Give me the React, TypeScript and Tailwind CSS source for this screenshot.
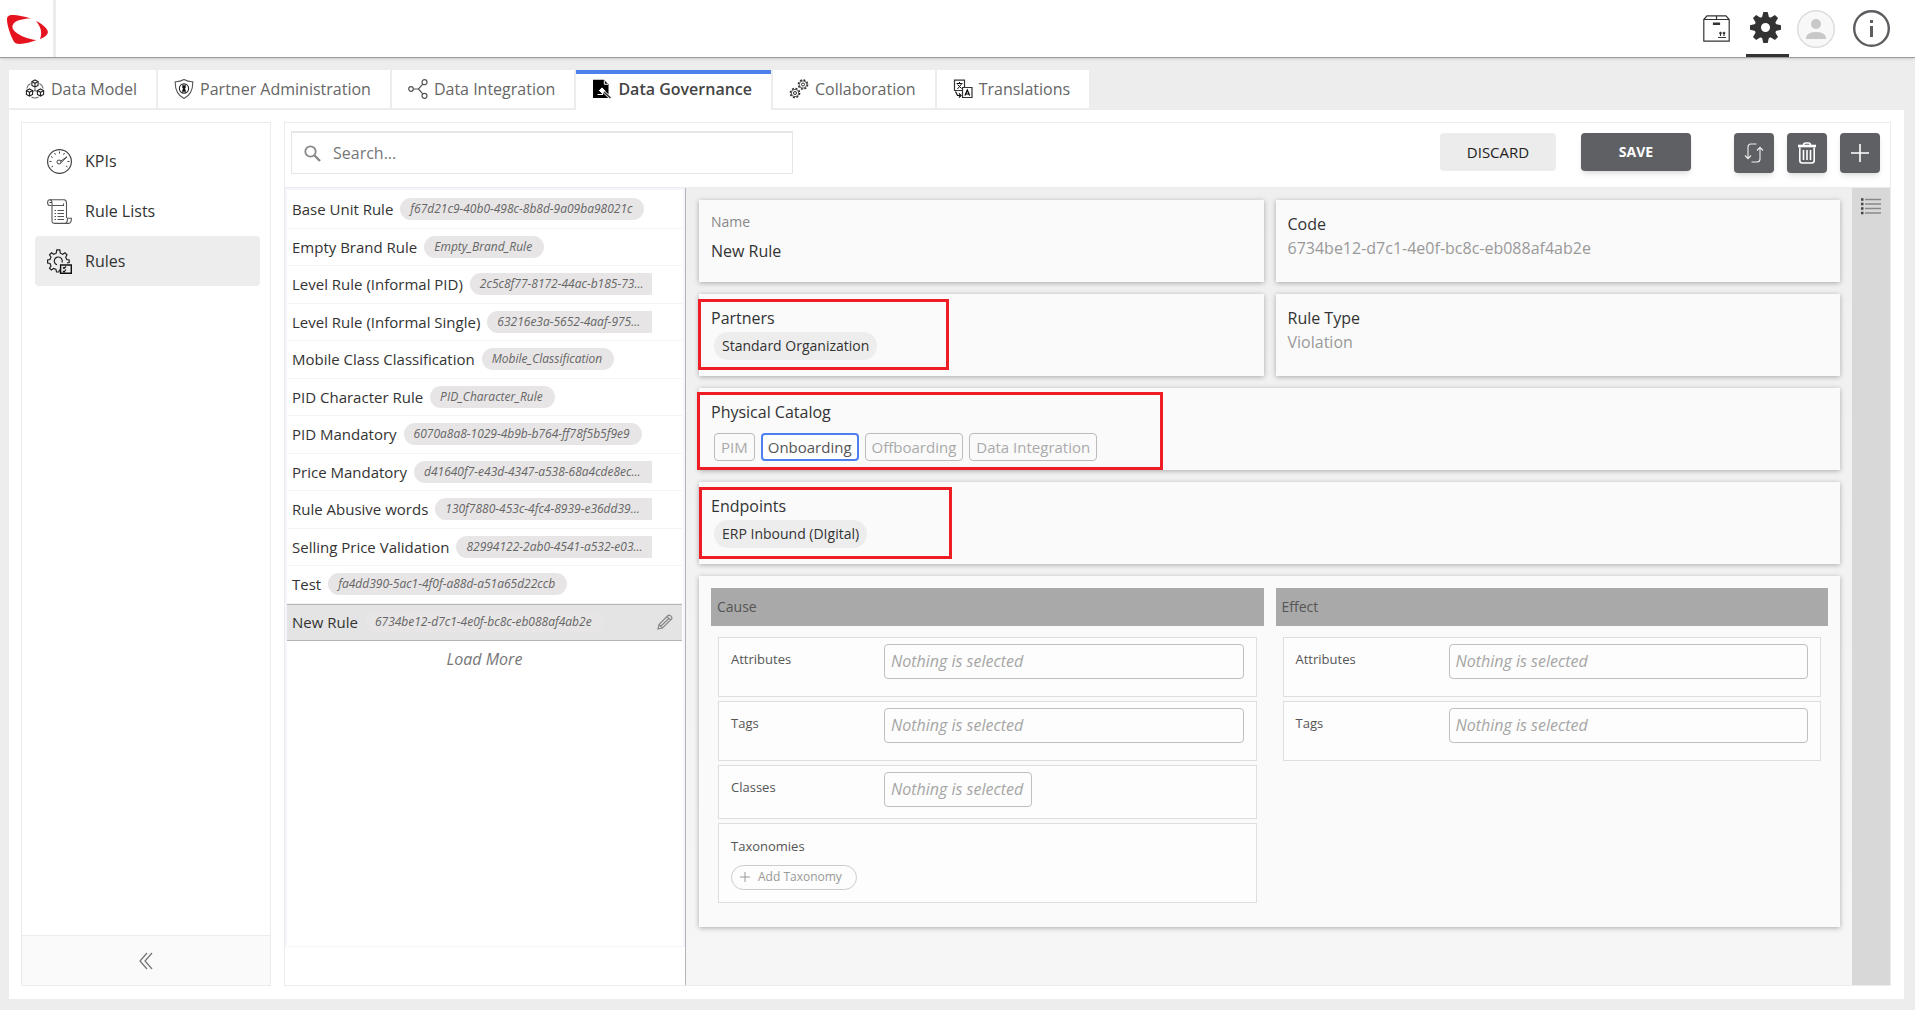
import React, { useState } from "react";

const rules = [
  { name: "Base Unit Rule", code: "f67d21c9-40b0-498c-8b8d-9a09ba98021c" },
  { name: "Empty Brand Rule", code: "Empty_Brand_Rule" },
  { name: "Level Rule (Informal PID)", code: "2c5c8f77-8172-44ac-b185-73..." },
  { name: "Level Rule (Informal Single)", code: "63216e3a-5652-4aaf-975..." },
  { name: "Mobile Class Classification", code: "Mobile_Classification" },
  { name: "PID Character Rule", code: "PID_Character_Rule" },
  { name: "PID Mandatory", code: "6070a8a8-1029-4b9b-b764-ff78f5b5f9e9" },
  { name: "Price Mandatory", code: "d41640f7-e43d-4347-a538-68a4cde8ec..." },
  { name: "Rule Abusive words", code: "130f7880-453c-4fc4-8939-e36dd39..." },
  { name: "Selling Price Validation", code: "82994122-2ab0-4541-a532-e03..." },
  { name: "Test", code: "fa4dd390-5ac1-4f0f-a88d-a51a65d22ccb" },
  { name: "New Rule", code: "6734be12-d7c1-4e0f-bc8c-eb088af4ab2e" },
];

const angles = [0, 45, 90, 135, 180, 225, 270, 315];

function Logo() {
  return (
    <svg width="53" height="57" viewBox="0 0 53 57" fill="#e5131d">
      <path d="M31 18.5C24 16.5 17 15 12.500 15C8.500 15 7 16.500 7 19.500C7 25 10 34 13 40C14.500 43 16.500 44 19.500 44C25 43.800 31 42 36.500 40C29 39.500 20 36 15.500 32C12 29 11.500 26 14 23C17 20 24 18.500 31 18.500Z" />
      <path d="M36 21C41 23 45 26.500 47 29.500C48.500 32 48 34 45.500 36C44 37.200 42 38.300 40 39C42.500 33 41 27 36 21Z" />
    </svg>
  );
}

function Cube({ x, y }: { x: number; y: number }) {
  return (
    <g transform={`translate(${x} ${y})`}>
      <path d="M0-3.600L3.100-1.900V1.900L0 3.600L-3.100 1.900V-1.900Z" />
      <path d="M-3.100-1.900L0-.2L3.100-1.900M0-.2V3.600" />
    </g>
  );
}

function DataModelIcon() {
  return (
    <svg width="20" height="20" viewBox="0 0 20 20" fill="none" stroke="#222" strokeWidth="1.100">
      <Cube x={10} y={4.5} />
      <Cube x={4.5} y={13.5} />
      <Cube x={15.5} y={13.5} />
      <path d="M5.500 4.500Q2.500 6 1.800 9.500M14.500 4.500Q17.500 6 18.200 9.500M6.500 18Q10 20 13.500 18M10 9V11.500L7.800 12.500M10 11.500L12.200 12.500" stroke="#666" />
    </svg>
  );
}

function ShieldIcon() {
  return (
    <svg width="20" height="20" viewBox="0 0 20 20" fill="none" stroke="#555">
      <path d="M10 .6C7.500 2 4 2.800 1.200 2.700C1 10 3 16 10 19.500C17 16 19 10 18.800 2.700C16 2.800 12.500 2 10 .6Z" strokeWidth="1.100" />
      <circle cx="10" cy="9.500" r="4.600" stroke="#222" strokeWidth="1.100" />
      <path d="M8.500 6.500H11.500V8.500L10.800 9.500L11.800 12.500H8.200L9.200 9.500L8.500 8.500Z" fill="#111" stroke="#111" strokeWidth=".5" />
    </svg>
  );
}

function IntegrationIcon() {
  return (
    <svg width="20" height="20" viewBox="0 0 20 20" fill="none" stroke="#555" strokeWidth="1.200">
      <circle cx="3" cy="10" r="2.300" />
      <circle cx="16.500" cy="3.200" r="2.500" />
      <circle cx="16.500" cy="16.800" r="2.500" />
      <path d="M5.300 10H10.500L14.800 5.200M10.500 10L14.800 14.800" />
    </svg>
  );
}

function GovernanceIcon() {
  return (
    <svg width="20" height="20" viewBox="0 0 20 20">
      <path d="M1 .8H12L16.500 5.500V19H1Z" fill="#000" />
      <path d="M12.300 1.500V5.300H16" fill="none" stroke="#fff" />
      <path d="M6.500 11.500L10 8L14 12L10.500 15.500Z" fill="#fff" stroke="#000" strokeWidth=".8" />
      <path d="M12 13L18.500 19" stroke="#fff" strokeWidth="3" />
      <path d="M12 13L18.500 19" stroke="#333" strokeWidth="1.600" />
      <path d="M5.500 15.500H11" stroke="#fff" />
    </svg>
  );
}

function SmallGear({ x, y }: { x: number; y: number }) {
  return (
    <g transform={`translate(${x} ${y})`}>
      <circle r="4.600" strokeWidth="1.500" strokeDasharray="2 1.600" />
      <circle r="3.700" strokeWidth=".8" />
      <circle r="1.500" />
    </g>
  );
}

function CollaborationIcon() {
  return (
    <svg width="20" height="20" viewBox="0 0 20 20" fill="none" stroke="#333">
      <SmallGear x={6} y={14} />
      <SmallGear x={14} y={5.5} />
    </svg>
  );
}

function TranslationIcon() {
  return (
    <svg width="20" height="20" viewBox="0 0 20 20" fill="none" stroke="#333">
      <path d="M10 11.500H1.500V1.200H11.500V8" strokeWidth="1.200" />
      <path d="M3.500 4.500H9.500M6.500 3V4.500M4.500 10L8.500 5M4.500 5.500L8.500 9.500" stroke="#111" />
      <path d="M9.500 8.500H19V18.500H9.500Z" strokeWidth="1.200" />
      <path d="M12 16.500L14.300 11L16.600 16.500M12.800 15H15.800" stroke="#000" strokeWidth="1.200" />
      <path d="M2.500 12.500L4.500 16.500H8M6 14.500L8 16.500L6 18.500" stroke="#111" strokeWidth="1.200" />
    </svg>
  );
}

function KpiIcon() {
  return (
    <svg width="25" height="25" viewBox="0 0 25 25" fill="none" stroke="#444">
      <circle cx="12.500" cy="12.500" r="11.900" strokeWidth="1.200" />
      <circle cx="12" cy="13" r="2" />
      <path d="M13.800 12L20 7.800L14.200 13.500" />
      <path d="M12.500 2.500V4.500M2.500 12.500H4.500M20.500 12.500H22.500M7.500 4L8.500 5.700M17.500 4L16.500 5.700M4 7.500L5.700 8.500M4.500 18L6 17M20.500 18L19 17" />
    </svg>
  );
}

function RuleListIcon() {
  return (
    <svg width="25" height="25" viewBox="0 0 25 25" fill="none" stroke="#555" strokeWidth="1.100">
      <path d="M4.500 6.500H2.500Q.6 6.500 .6 3.600Q.6 .8 2.800 .8H17Q19.500 1 19.500 4V19" />
      <path d="M2.800 .8Q5 1 5 4V22.500Q5.200 24.400 7.500 24.400H22Q24.400 24 24.400 19.300H20.500Q20.500 24 18 24.400" />
      <path d="M5 6.500H16.500V4.500M2.500 3.500H5" />
      <path d="M7.500 11.500H9M7.500 14.500H9M7.500 17.500H9M7.500 20.500H9M10.500 11.500H17M10.500 14.500H17M10.500 17.500H17M10.500 20.500H17" />
    </svg>
  );
}

function RulesIcon() {
  return (
    <svg width="25" height="25" viewBox="0 0 25 25" fill="none" stroke="#222" strokeWidth="1.200">
      <path d="M12.500 20.500L12 23H9.500L9 20.500L6.500 19.500L4.300 21L2.500 19.200L4 17L3 14.500L.6 14V11L3 10.500L4 8L2.500 5.800L4.500 3.800L6.700 5.300L9.200 4.200L9.800 .8H12.800L13.300 4.200L15.800 5.300L18 3.800L20 5.800L18.700 8L19.700 10.500L22.200 11V13.500L20 14" />
      <path d="M10 15.800A4 4 0 1 1 15 13.500" />
      <path d="M13.600 16H24.300V24.300H13.600Z" stroke="#111" strokeWidth="1.400" />
      <path d="M16 18.500L17 19.500L19 17.500M16 22L17 23L19 20.500" stroke="#111" />
    </svg>
  );
}

function PackageIcon() {
  return (
    <svg width="27" height="27" viewBox="0 0 27 27" fill="none" stroke="#333" strokeWidth="1.200">
      <path d="M.8 4.500L4 .8H23L26.200 4.500V26.200H.8ZM.8 4.500H26.200M13.500 .8V4.500" />
      <path d="M10.500 8H16.500V9.500H10.500Z" fill="#333" />
      <path d="M15 22.500H23M17.500 21V17.500M21 21V17.500M16.300 18.500L17.500 17.300L18.700 18.500M19.800 18.500L21 17.300L22.200 18.500" />
    </svg>
  );
}

function GearIcon() {
  return (
    <svg width="31" height="31" viewBox="-15.500 -15.500 31 31" fill="#333">
      {angles.map((a) => (
        <path key={a} d="M-2.200-15.500H2.200L3.500-10H-3.500Z" transform={`rotate(${a})`} />
      ))}
      <circle r="7.800" fill="none" stroke="#333" strokeWidth="6.500" />
    </svg>
  );
}

function Field({ id, label, className }: { id: string; label: string; className: string }) {
  const narrow = label === "Classes";
  return (
    <div className={`flex border border-[#dedede] bg-[#fdfdfd] px-3 pt-1.5 ${className}`}>
      <label htmlFor={id} className="w-[153px] shrink-0 pt-[5px] text-[13px] leading-5 text-[#555]">
        {label}
      </label>
      <input
        id={id}
        placeholder="Nothing is selected"
        className={`h-[35px] rounded border border-[#c0c0c0] bg-[#fdfdfd] px-1.5 pb-0.5 text-[16px] italic placeholder:text-[#a5a5a5] ${narrow ? "w-[148px]" : "min-w-0 flex-1"}`}
      />
    </div>
  );
}

function Card({ children, className = "" }: { children: React.ReactNode; className?: string }) {
  return (
    <section className={`relative bg-[#fafafa] px-3 shadow-[0_1px_5px_rgba(0,0,0,0.3)] ${className}`}>
      {children}
    </section>
  );
}

function App() {
  const tabs = [
    { label: "Data Model", icon: <DataModelIcon /> },
    { label: "Partner Administration", icon: <ShieldIcon /> },
    { label: "Data Integration", icon: <IntegrationIcon /> },
    { label: "Data Governance", icon: <GovernanceIcon /> },
    { label: "Collaboration", icon: <CollaborationIcon /> },
    { label: "Translations", icon: <TranslationIcon /> },
  ];
  const menu = [
    { label: "KPIs", icon: <KpiIcon /> },
    { label: "Rule Lists", icon: <RuleListIcon /> },
    { label: "Rules", icon: <RulesIcon /> },
  ];
  const catalogs = ["PIM", "Onboarding", "Offboarding", "Data Integration"];
  const [tab, setTab] = useState("Data Governance");
  const [page, setPage] = useState("Rules");
  const [rule, setRule] = useState("New Rule");
  const [catalog, setCatalog] = useState("Onboarding");

  return (
    <div className="flex min-h-screen flex-col bg-[#ededed] font-['Open_Sans',sans-serif] text-[#333]">
      <header className="flex h-[58px] items-stretch justify-between border-b border-[#9c9c9c] bg-white shadow-sm">
        <a href="#" aria-label="Home" className="border-r-3 border-[#ececec]">
          <Logo />
        </a>
        <div className="flex items-center pr-[25px]">
          <button aria-label="Packages" className="mr-4">
            <PackageIcon />
          </button>
          <button aria-label="Settings" className="mr-2 flex h-full w-[43px] items-center border-b-3 border-[#333] pl-1">
            <GearIcon />
          </button>
          <button aria-label="Account" className="mr-[18px]">
            <svg width="38" height="38" viewBox="0 0 38 38">
              <circle cx="19" cy="19" r="18.300" fill="#f8f8f8" stroke="#dcdcdc" strokeWidth="1.400" />
              <circle cx="19" cy="14" r="5" fill="#c8c8c8" />
              <path d="M9 29V27Q11 22 19 22Q27 22 29 27V29Z" fill="#c8c8c8" />
            </svg>
          </button>
          <button aria-label="Info">
            <svg width="37" height="37" viewBox="0 0 37 37">
              <circle cx="18.500" cy="18.500" r="17.300" fill="none" stroke="#5c5d60" strokeWidth="2.400" />
              <path d="M17 10H20V13H17ZM17 16H20V27H17Z" fill="#5c5d60" />
            </svg>
          </button>
        </div>
      </header>

      <nav className="mx-[9px] mt-3 flex h-10 gap-0.5">
        {tabs.map((t) => (
          <button
            key={t.label}
            onClick={() => setTab(t.label)}
            className={`flex items-center gap-1.5 bg-white pl-4 pr-[19px] text-[16px] ${
              t.label === tab
                ? "h-10 border-t-4 border-[#4d7fee] pb-1.5 font-semibold text-[#444]"
                : "h-[38px] text-[#666]"
            }`}
          >
            {t.icon}
            {t.label}
          </button>
        ))}
      </nav>

      <main className="mb-[11px] ml-[9px] mr-[11px] flex flex-1 gap-[13px] bg-white pb-[13px] pl-3 pr-[13px] pt-3">
        <aside className="flex w-[250px] shrink-0 flex-col border border-[#ececec]">
          <div className="flex flex-1 flex-col pl-[13px] pr-2.5 pt-[13px]">
            {menu.map((m) => (
              <button
                key={m.label}
                onClick={() => setPage(m.label)}
                className={`flex h-[50px] items-center gap-[13px] rounded-sm px-3 text-[16px] ${m.label === page ? "bg-[#ededed]" : ""}`}
              >
                {m.icon}
                {m.label}
              </button>
            ))}
          </div>
          <button aria-label="Collapse menu" className="flex h-[50px] items-center justify-center border-t border-[#ececec] bg-[#fafafa]">
            <svg width="14" height="18" viewBox="0 0 14 18" fill="none" stroke="#777" strokeWidth="1.300">
              <path d="M8 1L1 9L8 17M13 1L6 9L13 17" />
            </svg>
          </button>
        </aside>

        <div className="flex min-w-0 flex-1 flex-col border border-[#ececec]">
          <div className="flex h-[65px] items-start border-b border-[#ececec] pl-1.5 pr-2.5 pt-2">
            <label className="flex h-[43px] w-[502px] items-center gap-3 border border-t-2 border-[#e6e6e6] pl-3">
              <svg width="17" height="17" viewBox="0 0 17 17" fill="none" stroke="#888" strokeWidth="1.800">
                <circle cx="6.500" cy="6.500" r="5.200" />
                <path d="M10.500 10.500L16 16" strokeWidth="2.400" />
              </svg>
              <input aria-label="Search" placeholder="Search..." className="flex-1 text-[16px] outline-none placeholder:text-[#777]" />
            </label>
            <div className="ml-auto flex items-start gap-[13px] pt-0.5">
              <button className="h-[38px] w-[116px] rounded-sm bg-[#ececec] text-[15px] font-medium text-[#222]">DISCARD</button>
              <button className="ml-3 mr-[30px] h-[38px] w-[110px] rounded-sm bg-[#5f6064] pb-0.5 text-[14px] font-bold text-white shadow-md">SAVE</button>
              <button aria-label="Refresh" className="flex size-10 items-center justify-center rounded bg-[#5f6064] shadow-md">
                <svg width="20" height="20" viewBox="0 0 20 20" fill="none" stroke="#eee" strokeWidth="1.100">
                  <path d="M12.500 1H7Q4 1 4 4V15.500M1 12.500L4 15.700L7 12.500M7.500 19H13Q16 19 16 16V4.500M13 7.500L16 4.300L19 7.500" />
                </svg>
              </button>
              <button aria-label="Delete" className="flex size-10 items-center justify-center rounded bg-[#5f6064] shadow-md">
                <svg width="20" height="22" viewBox="0 0 20 22" fill="none" stroke="#fff" strokeWidth="1.600">
                  <path d="M1 4H19" strokeWidth="2.600" />
                  <path d="M6.500 3.500Q6.500 1 8.500 1H11.500Q13.500 1 13.500 3.500M2.800 5.500V18.500Q2.800 21 5.300 21H14.700Q17.200 21 17.200 18.500V5.500M6.500 8V18M10 8V18M13.500 8V18" />
                </svg>
              </button>
              <button aria-label="Add" className="flex size-10 items-center justify-center rounded bg-[#5f6064] shadow-md">
                <svg width="18" height="18" viewBox="0 0 18 18" stroke="#fff" strokeWidth="1.600">
                  <path d="M9 0V18M0 9H18" />
                </svg>
              </button>
            </div>
          </div>

          <div className="flex flex-1">
            <div className="flex w-[401px] shrink-0 flex-col border-r border-[#b5b5b5]">
              <div className="flex-1 border-2 border-b border-[#f3f7fd] pr-px pt-px">
                <ul className="grid h-[450px] grid-rows-12">
                  {rules.map((r) => (
                    <li
                      key={r.name}
                      onClick={() => setRule(r.name)}
                      className={`flex items-center border-b pl-[5px] ${
                        r.name === rule ? "border-t border-[#b4b4b4] bg-[#e4e4e4]" : "border-[#f3f3f5]"
                      }`}
                    >
                      <div className="flex w-[360px] items-center gap-[7px] whitespace-nowrap text-[15px] leading-6">
                        {r.name}
                        <span
                          className={`h-[22px] bg-[#e7e5e5] pl-2.5 text-[12px] italic leading-[22px] text-[#666] ${
                            r.code.endsWith("...") ? "flex-1 rounded-l-full" : "rounded-full pr-3"
                          }`}
                        >
                          {r.code}
                        </span>
                      </div>
                      {r.name === rule && (
                        <button aria-label="Edit rule" className="ml-[5px]">
                          <svg width="16" height="16" viewBox="0 0 16 16" fill="none" stroke="#888" strokeWidth="1.200">
                            <path d="M1 15L2 10.500L11 1.500Q12 .5 13.500 1.800L14.300 2.600Q15.500 4 14.500 5L5.500 14L1 15ZM2 10.500L5.500 14M10 2.500L13.500 6M3.800 12.200L12 4.200" />
                          </svg>
                        </button>
                      )}
                    </li>
                  ))}
                </ul>
                <button className="block w-full py-1.5 text-center text-[16px] italic text-[#777]">Load More</button>
              </div>
              <div className="h-[38px]" />
            </div>

            <div className="min-w-0 flex-1 bg-linear-to-b from-[#efefef] to-[#f6f6f6] pl-[13px] pr-3 pt-3">
              <div className="grid grid-cols-2 gap-x-3 gap-y-3">
                <Card className="h-[82px] pt-2.5">
                  <label htmlFor="name" className="block text-[14px] leading-6 text-[#888]">Name</label>
                  <input id="name" defaultValue="New Rule" className="mt-[5px] block w-full text-[16px] leading-6 outline-none" />
                </Card>
                <Card className="h-[82px] pt-3">
                  <h2 className="text-[16px] leading-6">Code</h2>
                  <p className="text-[16px] leading-6 text-[#999]">6734be12-d7c1-4e0f-bc8c-eb088af4ab2e</p>
                </Card>
                <Card className="h-[82px] pt-3">
                  <h2 className="text-[16px] leading-6">Partners</h2>
                  <span className="ml-[3px] mt-0.5 block h-7 w-fit rounded-full bg-[#ededed] px-2 text-[14px] leading-7">Standard Organization</span>
                  <div className="pointer-events-none absolute -left-px top-[5px] h-[71px] w-[251px] border-3 border-[#ee1c24]" />
                </Card>
                <Card className="h-[82px] pt-3">
                  <h2 className="text-[16px] leading-6">Rule Type</h2>
                  <p className="text-[16px] leading-6 text-[#999]">Violation</p>
                </Card>
                <Card className="col-span-2 h-[82px] pt-3">
                  <h2 className="text-[16px] leading-6">Physical Catalog</h2>
                  <div className="ml-[3px] mt-[9px] flex gap-1.5">
                    {catalogs.map((c) => (
                      <button
                        key={c}
                        onClick={() => setCatalog(c)}
                        className={`h-7 rounded text-[15px] leading-6 ${
                          c === catalog ? "border-2 border-[#4d7fee] bg-white px-[5px] text-[#555]" : "border border-[#bbb] px-1.5 text-[#aaa]"
                        }`}
                      >
                        {c}
                      </button>
                    ))}
                  </div>
                  <div className="pointer-events-none absolute -left-0.5 top-1 h-[78px] w-[466px] border-3 border-[#ee1c24]" />
                </Card>
                <Card className="col-span-2 h-[82px] pt-3">
                  <h2 className="text-[16px] leading-6">Endpoints</h2>
                  <span className="ml-[3px] mt-0.5 block h-7 w-fit rounded-full bg-[#ededed] px-2 text-[14px] leading-7">ERP Inbound (DIgital)</span>
                  <div className="pointer-events-none absolute left-0 top-[5px] h-[72px] w-[253px] border-3 border-[#ee1c24]" />
                </Card>
                <Card className="col-span-2 grid grid-cols-2 gap-3 pb-6 pt-3">
                  <div>
                    <h3 className="bg-[#a9a9a9] px-1.5 text-[14px] leading-[38px] text-[#555]">Cause</h3>
                    <div className="mx-[7px] mt-[11px] flex flex-col gap-1">
                      <Field id="cause-attributes" label="Attributes" className="h-[60px]" />
                      <Field id="cause-tags" label="Tags" className="h-[60px]" />
                      <Field id="cause-classes" label="Classes" className="h-[54px]" />
                      <div className="h-20 border border-[#dedede] bg-[#fdfdfd] px-3 pt-3">
                        <h4 className="text-[13px] leading-5 text-[#555]">Taxonomies</h4>
                        <button className="mt-[9px] flex h-[25px] items-center gap-2 rounded-full border border-[#ccc] pb-0.5 pl-2 pr-3.5 text-[12px] text-[#999]">
                          <svg width="10" height="10" viewBox="0 0 10 10" stroke="#999">
                            <path d="M5 0V10M0 5H10" />
                          </svg>
                          Add Taxonomy
                        </button>
                      </div>
                    </div>
                  </div>
                  <div>
                    <h3 className="bg-[#a9a9a9] px-1.5 text-[14px] leading-[38px] text-[#555]">Effect</h3>
                    <div className="mx-[7px] mt-[11px] flex flex-col gap-1">
                      <Field id="effect-attributes" label="Attributes" className="h-[60px]" />
                      <Field id="effect-tags" label="Tags" className="h-[60px]" />
                    </div>
                  </div>
                </Card>
              </div>
            </div>

            <div className="flex w-[38px] shrink-0 justify-center bg-[#d8d8d8] pt-2.5">
              <button aria-label="Outline" className="h-fit">
                <svg width="20" height="17" viewBox="0 0 20 17" stroke="#888" strokeWidth="1.200">
                  <path d="M4 1.500H20M4 6H20M4 10.500H20M4 15H20" strokeWidth="1.600" />
                  <path d="M0 1.500H2.500M0 6H2.500M0 10.500H2.500M0 15H2.500" stroke="#444" strokeWidth="2.600" />
                </svg>
              </button>
            </div>
          </div>
        </div>
      </main>
    </div>
  );
}

export default App;
